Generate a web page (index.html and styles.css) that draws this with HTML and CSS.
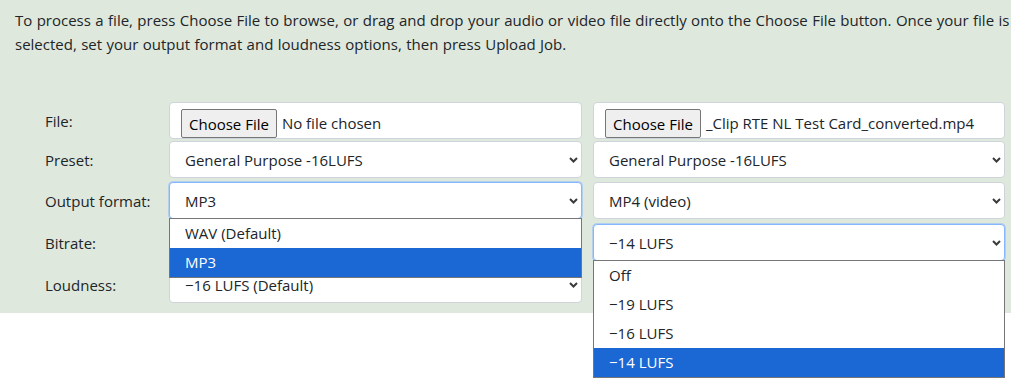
FILE: index.html
```html
<!DOCTYPE html>
<html lang="en">
<head>
    <meta charset="UTF-8">
    <meta name="viewport" content="width=device-width, initial-scale=1.0">
    <title>Loudness Job Upload</title>
    <link rel="stylesheet" href="styles.css">
</head>
<body>
    <div class="panel">
        <p class="intro">To process a file, press Choose File to browse, or drag and drop your audio or video file directly onto the Choose File button. Once your file is selected, set your output format and loudness options, then press Upload Job.</p>

        <form class="job-form">
            <!-- File -->
            <label class="label row-file">File:</label>
            <div class="control file-control row-file">
                <button type="button" class="file-btn">Choose File</button>
                <span class="file-name">No file chosen</span>
            </div>
            <div class="control file-control row-file">
                <button type="button" class="file-btn">Choose File</button>
                <span class="file-name">_Clip RTE NL Test Card_converted.mp4</span>
            </div>

            <!-- Preset -->
            <label class="label row-preset">Preset:</label>
            <div class="control select row-preset">
                <span>General Purpose -16LUFS</span>
                <svg class="chevron" width="9" height="6" viewBox="0 0 9 6"><path d="M1 1l3.5 3.5L8 1" /></svg>
            </div>
            <div class="control select row-preset">
                <span>General Purpose -16LUFS</span>
                <svg class="chevron" width="9" height="6" viewBox="0 0 9 6"><path d="M1 1l3.5 3.5L8 1" /></svg>
            </div>

            <!-- Output format -->
            <label class="label row-format">Output format:</label>
            <div class="control select focused row-format">
                <span>MP3</span>
                <svg class="chevron" width="9" height="6" viewBox="0 0 9 6"><path d="M1 1l3.5 3.5L8 1" /></svg>
                <ul class="dropdown">
                    <li>WAV (Default)</li>
                    <li class="active">MP3</li>
                </ul>
            </div>
            <div class="control select row-format">
                <span>MP4 (video)</span>
                <svg class="chevron" width="9" height="6" viewBox="0 0 9 6"><path d="M1 1l3.5 3.5L8 1" /></svg>
            </div>

            <!-- Bitrate (covered by the open format list) -->
            <label class="label row-bitrate">Bitrate:</label>
            <div class="control select row-bitrate"></div>
            <div class="control select focused row-bitrate">
                <span>&minus;14 LUFS</span>
                <svg class="chevron" width="9" height="6" viewBox="0 0 9 6"><path d="M1 1l3.5 3.5L8 1" /></svg>
                <ul class="dropdown">
                    <li>Off</li>
                    <li>&minus;19 LUFS</li>
                    <li>&minus;16 LUFS</li>
                    <li class="active">&minus;14 LUFS</li>
                </ul>
            </div>

            <!-- Loudness -->
            <label class="label row-loudness">Loudness:</label>
            <div class="control select row-loudness">
                <span>&minus;16 LUFS (Default)</span>
                <svg class="chevron" width="9" height="6" viewBox="0 0 9 6"><path d="M1 1l3.5 3.5L8 1" /></svg>
            </div>
        </form>
    </div>
</body>
</html>
```

FILE: styles.css
```css
/* Base */
body, p, ul, li, button {
    margin: 0;
    padding: 0;
}

* {
    box-sizing: border-box;
}

body {
    font-family: 'Open Sans', 'Noto Sans', sans-serif;
    font-size: 15px;
    color: #212529;
    background: #fff;
    min-height: 382px;
}

/* Green panel */
.panel {
    background: #dfe8dc;
    height: 313px;
}

.intro {
    padding: 8px 0 0 15px;
    line-height: 24px;
    word-spacing: 0.5px;
}

/* Form grid */
.job-form {
    display: grid;
    grid-template-columns: 113px 413px 412px;
    grid-template-rows: 39px 41px 42px 42px 37px;
    column-gap: 11px;
    padding-left: 45px;
    margin-top: 46px;
}

.row-file { grid-row: 1; }
.row-preset { grid-row: 2; }
.row-format { grid-row: 3; }
.row-bitrate { grid-row: 4; }
.row-loudness { grid-row: 5; }

.label {
    height: 37px;
    display: flex;
    align-items: center;
    white-space: nowrap;
}

/* Controls */
.control {
    position: relative;
    height: 37px;
    background: #fff;
    border: 1px solid #ced4da;
    border-radius: 4px;
    display: flex;
    align-items: center;
}

.select {
    justify-content: space-between;
    padding: 0 3px 0 15px;
}

.focused {
    border-color: #86b7fe;
    box-shadow: 0 0 0 1px rgba(134, 183, 254, 0.5);
}

.chevron {
    fill: none;
    stroke: #3b3b3b;
    stroke-width: 2;
}

/* File input */
.file-control {
    align-items: flex-start;
    padding: 6px 0 0 11px;
}

.file-btn {
    font: inherit;
    color: #000;
    height: 29px;
    padding: 0 7px;
    background: #efefef;
    border: 1px solid #767676;
    border-radius: 2px;
}

.file-name {
    margin-left: 5px;
    line-height: 29px;
    white-space: nowrap;
}

/* Open dropdown lists */
.dropdown {
    position: absolute;
    top: 100%;
    left: -1px;
    right: -1px;
    list-style: none;
    background: #fff;
    border: 1px solid #767676;
    z-index: 2;
}

.dropdown li {
    height: 29px;
    line-height: 29px;
    padding-left: 15px;
}

.dropdown li.active {
    background: #1b67d3;
    color: #fff;
}
```
